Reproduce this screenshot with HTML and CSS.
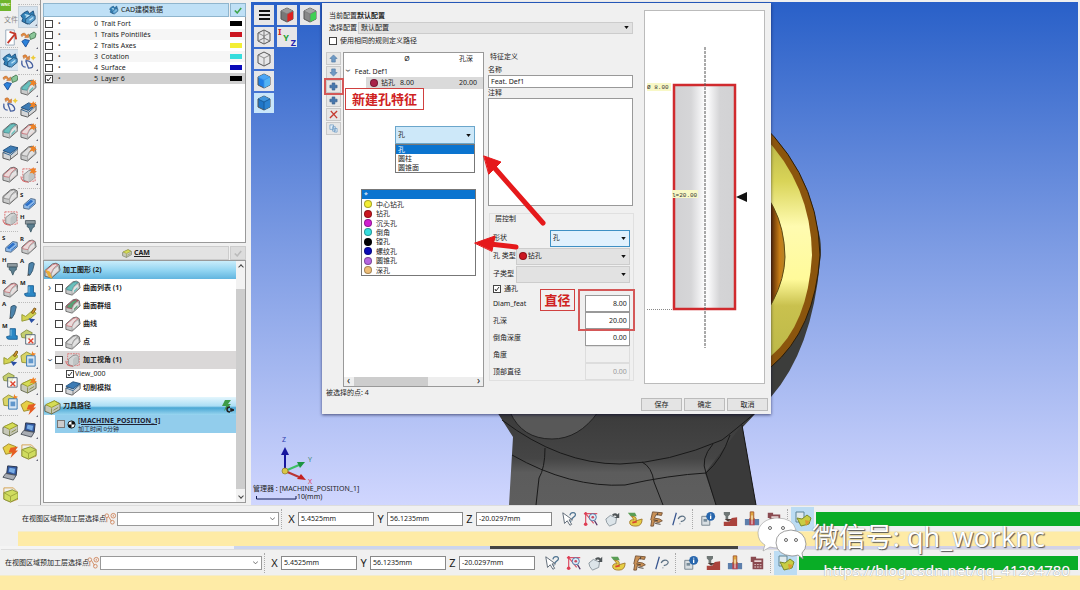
FILE: index.html
```html
<!DOCTYPE html>
<html lang="zh-CN">
<head>
    <meta charset="UTF-8">
    <meta name="viewport" content="width=device-width, initial-scale=1.0">
    <title>WorkNC</title>
    <link rel="stylesheet" href="styles.css">
</head>
<body>

    <!-- Icon sprite -->
    <svg class="sprite" aria-hidden="true">
        <symbol id="part" viewBox="0 0 18 18">
            <path d="M1 9 9 2q4-2 7 1l1 6-9 8-7-2z" fill="#c9caca" stroke="#666" stroke-linejoin="round"/>
            <path d="M2 9 9 3q3-2 6 0-6 3-7 9l-6-1z" fill="var(--c, #ddd)" stroke="var(--l, #777)" stroke-width=".7"/>
            <path d="M8 12q1-5 7-8l1 5-8 7z" fill="#e4e4e4" stroke="#888" stroke-width=".6"/>
            <path d="m10 12 4-4v2l-4 4z" fill="var(--c, #ddd)"/>
        </symbol>
        <symbol id="slab" viewBox="0 0 18 18">
            <path d="M1 9v6l7 2 9-7V4z" fill="#d4d6d8" stroke="#555"/>
            <path d="m1 7 8-5 8 2-8 6z" fill="#3d7cb5" stroke="#24527e"/>
            <path d="m1 9 8 3 8-7" fill="none" stroke="#2f638f"/>
            <path d="M9 12v5" stroke="#777"/>
        </symbol>
        <symbol id="outline" viewBox="0 0 18 18">
            <path d="M3 2h13v13H3z" fill="none" stroke="#dc6a6a" stroke-dasharray="2 1"/>
            <path d="m4 8 5-4q4-2 6 1v7l-6 4-5-2z" fill="#d3d5d5" stroke="#8a8a8a"/>
            <path d="M9 9q1-4 6-4v7l-6 4z" fill="#bfc4c4"/>
            <path d="M1 10q0 6 8 6" fill="none" stroke="#d25b5b"/>
        </symbol>
        <symbol id="spark" viewBox="0 0 18 18">
            <path d="m14 0 1 2 2-1-1 3 2 1-3 1v2l-2-2-3 1 2-3-2-2h3z" fill="#ee8225"/>
        </symbol>
        <symbol id="cad" viewBox="0 0 18 18">
            <path d="M4 4 8 2l2 3 4-3 1 4-2 4-5 6-6-3 1-3-2-3z" fill="#2f7fb5" stroke="#1d4f7c"/>
            <path d="m6 11 6-5 4 1v4l-6 5-4-1z" fill="#5aa0d0" stroke="#28577e"/>
            <path d="m5 6 4 1-3 2M10 12l4-3" stroke="#bfe4f6" fill="none" stroke-width="1.4"/>
        </symbol>
        <symbol id="surf" viewBox="0 0 18 18">
            <path d="M1 4q4-4 6 1l2-2v4H5l1-1Q4 3 2 6z" fill="#e6893c" stroke="#a85b20" stroke-width=".5"/>
            <path d="m10 4 5-3 2 2-1 4-5 2z" fill="#8bc79a" stroke="#487954"/>
            <path d="m2 11 3-2 5 1-4 7z" fill="#2d83db" stroke="#1c4f99"/>
        </symbol>
        <symbol id="curve" viewBox="0 0 18 18">
            <path d="M3 3q4-3 5 2l2-2v4H6l1-1Q6 3 4 6z" fill="#e6893c" stroke="#a85b20" stroke-width=".5"/>
            <path d="m14 2 1 2 2 1-2 1-1 2-1-2-2-1 2-1z" fill="#edcb38"/>
            <path d="M2 8q-1 7 4 7M6 8l3 8q6 0 4-4-2-4-7-4" fill="none" stroke="#4660a0" stroke-width="1.4"/>
        </symbol>
        <symbol id="blue-part" viewBox="0 0 18 18">
            <path d="m3 11 8-7 5 1v5l-7 6-6-1z" fill="#8db9e9" stroke="#4c6583"/>
            <path d="m5 11 6-5 2 1-6 5zM9 14l6-5" fill="#2c73d0" stroke="#2769bf"/>
        </symbol>
        <symbol id="holder" viewBox="0 0 18 18">
            <path d="M5 4h11v4H5z" fill="#8e9aa0" stroke="#566168"/>
            <path d="M7 8h8v3l-2 1-2 5-2-5-2-1z" fill="#5c7f90" stroke="#3e5b69"/>
        </symbol>
        <symbol id="pen" viewBox="0 0 18 18">
            <path d="M9 3q4-3 6 0l-2 8-3 5-2-1z" fill="#4c83ab" stroke="#35566e"/>
            <path d="m8 14-1 3 3-1z" fill="#444"/>
        </symbol>
        <symbol id="mill" viewBox="0 0 18 18">
            <path d="M8 3h6v8h2v4H7q-3 0-3-3l4-1z" fill="#2b87c5" stroke="#1b5f94"/>
            <path d="M9 4v7" stroke="#8acbea"/>
        </symbol>
        <symbol id="path-tool" viewBox="0 0 18 18">
            <path d="m2 8 4 2 8-7 3 4-7 6-8 2z" fill="#d3d352" stroke="#969a35"/>
            <path d="m12 6 3-5 2 1-3 5z" fill="#d69a32" stroke="#7e5717"/>
            <path d="m9 12 7 1-4 4z" fill="#294fa5"/>
        </symbol>
        <symbol id="path-del" viewBox="0 0 18 18">
            <path d="m1 5 6-4 6 3-3 6-8-1z" fill="#c5cf70" stroke="#899344"/>
            <path d="M6 6h10v10H6z" fill="#fff" fill-opacity=".7" stroke="#567"/>
            <path d="m9 10 5 5m0-5-5 5" stroke="#df4631" stroke-width="1.5"/>
        </symbol>
        <symbol id="path-view" viewBox="0 0 18 18">
            <path d="m1 5 6-4 6 3-3 9-8-1z" fill="#d9d468" stroke="#989638"/>
            <path d="M7 5h9v11H7z" fill="#d9e7f4" stroke="#3374ae"/>
            <path d="M9 8h5v5H9z" fill="#6197cc"/>
            <path d="m13 0 1 2 3 1-3 2-2-1z" fill="#ee8225"/>
        </symbol>
        <symbol id="gold" viewBox="0 0 18 18">
            <path d="m1 8 10-5 6 3v6l-9 5-7-3z" fill="#c7c8b8" stroke="#666a55"/>
            <path d="m2 7 9-4 5 3-8 4z" fill="#d5dc55" stroke="#9b9e2c"/>
            <path d="M8 11v6m2-4 5-3" stroke="#858b4a"/>
        </symbol>
        <symbol id="bolt" viewBox="0 0 18 18">
            <path d="m1 6 6-4 8 3-2 6-9 2z" fill="#e6cf45" stroke="#a08a2b"/>
            <path d="m9 6 8-1-3 4h3l-8 8 2-6H7z" fill="#e65c22"/>
        </symbol>
        <symbol id="laptop" viewBox="0 0 18 18">
            <path d="m6 2 10 1-1 9-10-2z" fill="#3359a0" stroke="#27334b"/>
            <path d="m8 4 6 1-1 5-6-2z" fill="#7aaee5"/>
            <path d="m4 10 11 2-3 5-11-3z" fill="#a9adb4" stroke="#4d535d"/>
        </symbol>
        <symbol id="wire" viewBox="0 0 18 18">
            <path d="M2 2h10l5 5v7l-8 3-7-3z" fill="none" stroke="#d4a34c"/>
            <path d="m2 7 9-3 6 3v6l-8 4-7-3z" fill="#d0dc5e" stroke="#85923d"/>
            <path d="m2 7 7 4v5m0-5 8-4" fill="none" stroke="#9da53c"/>
        </symbol>
        <symbol id="cube" viewBox="0 0 20 20">
            <path d="m10 3 6 3v8l-6 3-6-3V6z" fill="var(--left, none)" stroke="#555"/>
            <path d="m10 3 6 3-6 3-6-3z" fill="var(--top, none)"/>
            <path d="m10 9 6-3v8l-6 3z" fill="var(--right, none)"/>
            <path d="m4 6 6 3 6-3m-6 3v8" fill="none" stroke="var(--edge, #777)" stroke-width=".8"/>
        </symbol>
        <symbol id="help-cursor" viewBox="0 0 18 18">
            <path d="m2 2 2 12 3-3 3 5 2-1-3-5h4z" fill="#fff" stroke="#53606d"/>
            <path d="M10 5q1-4 5-3 3 2-1 5l-2 2m-1 2v1" fill="none" stroke="#4d7290" stroke-width="1.4"/>
        </symbol>
        <symbol id="measure" viewBox="0 0 18 18">
            <path d="M3 1v14M1 3h15M4 4l8 10" fill="none" stroke="#db556b" stroke-width="1.4"/>
            <circle cx="11" cy="7" r="4" fill="#dceaf6" stroke="#4771a4"/>
            <circle cx="11" cy="7" r="1.500" fill="#c8495d"/>
            <path d="m13 11 3 5" stroke="#536" stroke-width="1.500"/>
            <circle cx="3" cy="3" r="1.500" fill="#df3d53"/><circle cx="3" cy="15" r="2" fill="#df3d53"/>
        </symbol>
        <symbol id="turn" viewBox="0 0 18 18">
            <path d="m1 9 5-4 7 3-1 6-7 3-3-4z" fill="#dce4e9" stroke="#88949c"/>
            <path d="M8 4q4-3 6 0l2-2v6h-5l2-2q-2-2-4 0" fill="#4f5558"/>
        </symbol>
        <symbol id="paint" viewBox="0 0 18 18">
            <path d="M1 2h8l2 4H4z" fill="#5a9d55"/>
            <path d="M5 6q7 0 5 5l7-2q0 8-7 8-7 0-7-4t5-3z" fill="#e6ce44" stroke="#a2782a"/>
            <path d="m6 13 5-1" stroke="#d7462f" stroke-width="2"/>
        </symbol>
        <symbol id="caliper" viewBox="0 0 18 18">
            <path d="m4 1 11 1-1 3-6-1-2 4 6 1 3 2-4 2-5-1-1 5H2l1-6-1-1z" fill="#c99055" stroke="#725034"/>
            <path d="m10 2-1 3m-4 5 5 1m-3 3 6 1" stroke="#423932"/>
        </symbol>
        <symbol id="slash-help" viewBox="0 0 18 18">
            <path d="M6 2 2 16" stroke="#37558f" stroke-width="1.4"/>
            <path d="M8 9q2-4 6-3 4 2 0 5l-3 1m-1 2v1" fill="none" stroke="#5c7184" stroke-width="1.3"/>
        </symbol>
        <symbol id="info" viewBox="0 0 18 18">
            <path d="M2 6h9v10H2z" fill="#d8dee2" stroke="#6f7d87"/>
            <path d="M4 9h4v3H4z" fill="#778b98"/>
            <circle cx="12" cy="6" r="5" fill="#2866ad"/><path d="M12 5v4m0-6v1" stroke="#fff" stroke-width="1.5"/>
        </symbol>
        <symbol id="machine" viewBox="0 0 18 18">
            <path d="M2 1h7v3L7 6v3H4V6L2 4z" fill="#6f7776"/>
            <path d="M2 12h6l3-4 6-1v10H2z" fill="#aa433d"/>
            <path d="m3 9 4 3 4-3z" fill="#503c38"/>
        </symbol>
        <symbol id="stock" viewBox="0 0 18 18">
            <path d="M1 9h16v7H1z" fill="#5d7fac"/>
            <path d="M6 8h6v8H6z" fill="#b54751"/>
            <path d="M7 1h4v9H7z" fill="#e0a73f" stroke="#a1562c"/>
            <path d="M9 5v10" stroke="#fff"/>
        </symbol>
        <symbol id="calc" viewBox="0 0 18 18">
            <path d="M2 2h6v2h8v12H4V8H2z" fill="#8a4a50"/>
            <path d="M6 6h8v2H6zM6 10h2v1H6zM9 10h2v1H9zM12 10h2v1h-2zM6 13h2v1H6zM9 13h2v1H9zM12 13h2v1h-2z" fill="#e8d3d3"/>
        </symbol>
        <symbol id="rings" viewBox="0 0 14 14">
            <g fill="none" stroke="#cf8860"><circle cx="3" cy="4" r="2"/><circle cx="10" cy="4" r="2.500"/><circle cx="9" cy="11" r="2"/><path d="M3 6v5m7-8v2m-5 0 3 5"/></g>
        </symbol>
        <symbol id="run" viewBox="0 0 18 18">
            <path d="M2 2h8v10H2z" fill="#dfe9ec" stroke="#5d8495"/>
            <path d="m3 8 5 1 5-4 4 3-2 6-8 2z" fill="#c8cd43" stroke="#7b8a2c"/>
            <path d="m11 10 5 1-4 5z" fill="#dd9a31"/>
        </symbol>
        <symbol id="plus" viewBox="0 0 10 10"><path d="M3.500 1h3v2.500H9v3H6.500V9h-3V6.500H1v-3h2.500z" fill="#4777ad" stroke="#2b5182" stroke-width=".6"/></symbol>
        <symbol id="up" viewBox="0 0 10 10"><path d="m5 1 4 4H7v4H3V5H1z" fill="#6f9ac5" stroke="#406d9c" stroke-width=".6"/></symbol>
    </svg>

    <div class="app">
        <div class="upper">

            <!-- Outer tool strip -->
            <nav class="strip strip-outer" aria-label="工具">
                <div class="strip-head">
                    <span class="logo">WNC</span>
                    <span class="file-menu">文件</span>
                    <button class="tool" aria-label="打开"><svg viewBox="0 0 18 18"><path d="M4 1h9v16H4z" fill="#fff" stroke="#9ab"/><path d="m6 15 8-10m-6-2 6 2 1 6" fill="none" stroke="#c53a2c" stroke-width="2"/></svg></button>
                </div>
                <div class="tool-group">
                    <button class="tool active" aria-label="CAD"><svg><use href="#cad"/></svg></button>
                    <button class="tool" aria-label="曲面"><svg><use href="#surf"/></svg></button>
                    <button class="tool" aria-label="曲线"><svg><use href="#curve"/></svg></button>
                </div>
                <div class="tool-group">
                    <button class="tool" aria-label="曲面列表"><svg class="teal"><use href="#part"/></svg></button>
                    <button class="tool" aria-label="毛坯"><svg><use href="#slab"/></svg></button>
                    <button class="tool" aria-label="曲线列表"><svg class="rose"><use href="#part"/></svg></button>
                    <button class="tool" aria-label="点列表"><svg class="grey"><use href="#part"/></svg></button>
                    <button class="tool" aria-label="视角"><svg><use href="#outline"/></svg></button>
                </div>
                <div class="tool-group lettered">
                    <button class="tool" aria-label="S"><i>S</i><svg><use href="#blue-part"/></svg></button>
                    <button class="tool" aria-label="H"><i>H</i><svg><use href="#holder"/></svg></button>
                    <button class="tool" aria-label="R"><i>R</i><svg class="rose"><use href="#part"/></svg></button>
                    <button class="tool" aria-label="A"><i>A</i><svg><use href="#pen"/></svg></button>
                    <button class="tool" aria-label="M"><i>M</i><svg><use href="#mill"/></svg></button>
                </div>
                <div class="tool-group">
                    <button class="tool" aria-label="新建刀路"><svg><use href="#path-tool"/></svg></button>
                    <button class="tool" aria-label="删除刀路"><svg><use href="#path-del"/></svg></button>
                    <button class="tool" aria-label="查看刀路"><svg><use href="#path-view"/></svg></button>
                </div>
                <div class="tool-group">
                    <button class="tool" aria-label="计算"><svg><use href="#gold"/></svg></button>
                    <button class="tool" aria-label="批处理"><svg><use href="#bolt"/></svg></button>
                    <button class="tool" aria-label="后处理"><svg><use href="#laptop"/></svg></button>
                    <button class="tool" aria-label="模拟"><svg><use href="#wire"/></svg></button>
                </div>
            </nav>

            <div class="main">
                <div class="workspace">

                    <!-- Inner tool strip -->
                    <nav class="strip strip-inner" aria-label="工具栏">
                        <div class="tool-group more">
                            <button class="tool active" aria-label="CAD"><svg><use href="#cad"/></svg></button>
                            <button class="tool" aria-label="曲面"><svg><use href="#surf"/></svg></button>
                            <button class="tool" aria-label="曲线"><svg><use href="#curve"/></svg></button>
                        </div>
                        <div class="tool-group more">
                            <button class="tool" aria-label="曲面列表"><svg class="teal"><use href="#part"/><use href="#spark"/></svg></button>
                            <button class="tool" aria-label="毛坯"><svg><use href="#slab"/><use href="#spark"/></svg></button>
                            <button class="tool" aria-label="曲线列表"><svg class="rose"><use href="#part"/><use href="#spark"/></svg></button>
                            <button class="tool" aria-label="点列表"><svg class="grey"><use href="#part"/><use href="#spark"/></svg></button>
                            <button class="tool" aria-label="视角"><svg><use href="#outline"/><use href="#spark"/></svg></button>
                        </div>
                        <div class="tool-group lettered">
                            <button class="tool" aria-label="S"><i>S</i><svg><use href="#blue-part"/></svg></button>
                            <button class="tool" aria-label="H"><i>H</i><svg><use href="#holder"/></svg></button>
                            <button class="tool" aria-label="R"><i>R</i><svg class="rose"><use href="#part"/></svg></button>
                            <button class="tool" aria-label="A"><i>A</i><svg><use href="#pen"/></svg></button>
                            <button class="tool" aria-label="M"><i>M</i><svg><use href="#mill"/></svg></button>
                        </div>
                        <div class="tool-group more">
                            <button class="tool" aria-label="新建刀路"><svg><use href="#path-tool"/></svg></button>
                            <button class="tool" aria-label="删除刀路"><svg><use href="#path-del"/></svg></button>
                            <button class="tool" aria-label="查看刀路"><svg><use href="#path-view"/></svg></button>
                        </div>
                        <div class="tool-group more">
                            <button class="tool" aria-label="计算"><svg><use href="#gold"/><use href="#spark"/></svg></button>
                            <button class="tool" aria-label="批处理"><svg><use href="#bolt"/></svg></button>
                            <button class="tool" aria-label="后处理"><svg><use href="#laptop"/></svg></button>
                            <button class="tool" aria-label="模拟"><svg><use href="#wire"/></svg></button>
                        </div>
                    </nav>

                    <!-- CAD and CAM panels -->
                    <aside class="side">
                        <div class="panel-head cad-head">
                            <button class="panel-title"><svg><use href="#cad"/></svg>CAD建模数据</button>
                            <button class="panel-check" aria-label="确认"><svg viewBox="0 0 10 8"><path d="m1 4 3 3 5-6" fill="none" stroke="#3fa54a" stroke-width="2"/></svg></button>
                        </div>
                        <div class="layers">
                            <table>
                                <tr><td class="c-box"><input type="checkbox" aria-label="Trait Fort"></td><td class="c-dot">•</td><td class="c-num">0</td><td>Trait Fort</td><td class="c-swatch"><span class="swatch black"></span></td></tr>
                                <tr><td class="c-box"><input type="checkbox" aria-label="Traits Pointillés"></td><td class="c-dot">•</td><td class="c-num">1</td><td>Traits Pointillés</td><td class="c-swatch"><span class="swatch red"></span></td></tr>
                                <tr><td class="c-box"><input type="checkbox" aria-label="Traits Axes"></td><td class="c-dot">•</td><td class="c-num">2</td><td>Traits Axes</td><td class="c-swatch"><span class="swatch yellow"></span></td></tr>
                                <tr><td class="c-box"><input type="checkbox" aria-label="Cotation"></td><td class="c-dot">•</td><td class="c-num">3</td><td>Cotation</td><td class="c-swatch"><span class="swatch cyan"></span></td></tr>
                                <tr><td class="c-box"><input type="checkbox" aria-label="Surface"></td><td class="c-dot">•</td><td class="c-num">4</td><td>Surface</td><td class="c-swatch"><span class="swatch blue"></span></td></tr>
                                <tr class="selected"><td class="c-box"><input type="checkbox" aria-label="Layer 6" checked></td><td class="c-dot">•</td><td class="c-num">5</td><td>Layer 6</td><td class="c-swatch"><span class="swatch black"></span></td></tr>
                            </table>
                        </div>

                        <div class="panel-head">
                            <button class="panel-title cam"><svg><use href="#gold"/></svg><u>CAM</u></button>
                            <button class="panel-check" aria-label="确认"><svg viewBox="0 0 10 8"><path d="m1 4 3 3 5-6" fill="none" stroke="#bbb" stroke-width="2"/></svg></button>
                        </div>
                        <div class="cam-box">
                            <ul class="tree">
                                <li class="tree-head"><svg class="rose" viewBox="0 0 18 18"><use href="#part"/><path d="m1 8 5 2 3 8-4-2z" fill="#e8ae37"/></svg>加工图形 (2)</li>
                                <li class="tree-row"><span class="twist">›</span><label><input type="checkbox"><svg class="teal"><use href="#part"/></svg>曲面列表 (1)</label></li>
                                <li class="tree-row"><span class="twist"></span><label><input type="checkbox"><svg class="mix"><use href="#part"/></svg>曲面群组</label></li>
                                <li class="tree-row"><span class="twist"></span><label><input type="checkbox"><svg class="rose"><use href="#part"/></svg>曲线</label></li>
                                <li class="tree-row"><span class="twist"></span><label><input type="checkbox"><svg class="grey"><use href="#part"/></svg>点</label></li>
                                <li class="tree-row"><span class="twist down">›</span><label class="hl"><input type="checkbox"><svg><use href="#outline"/></svg>加工视角 (1)</label></li>
                                <li class="tree-view"><label><input type="checkbox" checked>View_000</label></li>
                                <li class="tree-row"><span class="twist"></span><label><input type="checkbox"><svg><use href="#slab"/></svg>切削模拟</label></li>
                                <li class="tree-head paths"><svg><use href="#gold"/></svg>刀具路径
                                    <svg class="go" viewBox="0 0 14 14"><path d="M5 1h6L8 5h3l-7 7 2-5H2z" fill="#3f9c48"/><path d="M10 8q-3 0-3 2.500T10 13m1-3 3 1-3 1z" fill="none" stroke="#222" stroke-width="1.500"/></svg></li>
                                <li class="machine-row">
                                    <input type="checkbox" aria-label="MACHINE_POSITION_1">
                                    <svg viewBox="0 0 10 10"><circle cx="5" cy="5" r="4" fill="#fff" stroke="#111"/><path d="M5 1a4 4 0 0 1 4 4H5v4a4 4 0 0 1-4-4h4z" fill="#111"/></svg>
                                    <a href="#machine"><u>[MACHINE_POSITION_1]</u><small>加工时间 0分钟</small></a>
                                </li>
                            </ul>
                            <div class="scroll-v"><span class="arrow-up"></span><span class="thumb"></span><span class="arrow-down"></span></div>
                        </div>
                    </aside>

                    <!-- 3D view -->
                    <main class="viewport">
                        <svg class="scene" viewBox="251 2 827 503" preserveAspectRatio="xMinYMin slice">
                            <defs>
                                <linearGradient id="gold-face" x1="0" y1="0" x2="0" y2="1">
                                    <stop offset="0" stop-color="#a9a63c"/><stop offset=".25" stop-color="#d9d458"/><stop offset=".42" stop-color="#fffbb0"/><stop offset=".62" stop-color="#fffa9a"/><stop offset=".72" stop-color="#c9c14e"/><stop offset="1" stop-color="#b7b546"/>
                                </linearGradient>
                                <linearGradient id="bore" x1="0" y1="0" x2="1" y2="0">
                                    <stop offset=".7" stop-color="#5a2c08"/><stop offset=".88" stop-color="#c77c15"/><stop offset="1" stop-color="#b38528"/>
                                </linearGradient>
                                <linearGradient id="steel" x1="0" y1="0" x2="0" y2="1">
                                    <stop offset="0" stop-color="#3b3b3b"/><stop offset=".5" stop-color="#454545"/><stop offset=".65" stop-color="#5c5c5c"/><stop offset="1" stop-color="#5e5e5e"/>
                                </linearGradient>
                            </defs>
                            <path d="M740 160Q830 200 820 262 812 350 771 397L740 430z" fill="#3c3d3b"/>
                            <path d="M740 105Q818 165 820 255 815 330 771 367L740 390z" fill="#8b550d" stroke="#2b1c08"/>
                            <path d="M740 115Q811 170 812 255 808 325 771 356L740 380z" fill="url(#gold-face)"/>
                            <path d="M740 170Q784 200 785 257 784 300 740 345z" fill="url(#bore)" stroke="#5d4a15"/>
                            <path d="M497 412 513 437 509 505H756L742 425 756 412z" fill="url(#steel)"/>
                            <path d="M742 425 705 473 716 505H756z" fill="#3a3a3a"/>
                            <path d="M510 412q12 27 42 27 27 0 46-27z" fill="#585858" stroke="#222"/>
                            <g fill="none" stroke="#191919" stroke-width="1">
                                <path d="M502 420Q560 464 620 464 668 463 722 440 735 430 755 413"/>
                                <path d="M512 455Q570 488 625 485 670 475 706 473"/>
                                <path d="M642 462q10 5 12 20l9 23M706 473l10 32M706 473q-6-14 7-29M706 473q16-14 24-38M545 448q0 20-6 30l-3 27M742 425l14 80"/>
                            </g>
                            <!-- axis triad -->
                            <g stroke-width="2">
                                <path d="M285 471V454" stroke="#16169e"/><path d="m285 447 4 8h-8z" fill="#16169e"/>
                                <path d="m285 471 14-6" stroke="#3dbf64"/><path d="m305 462-8 0 3 6z" fill="#1c9440"/>
                                <path d="m285 471 14 6" stroke="#b93434"/><path d="m306 480-5-6-4 5z" fill="#c42020"/>
                            </g>
                            <circle cx="285" cy="471" r="3" fill="#d9c746" stroke="#8b7c26" stroke-width=".7"/>
                            <text x="282" y="442" fill="#303fae">Z</text>
                            <text x="308" y="462" fill="#438a72">Y</text>
                            <text x="308" y="484" fill="#dd3b5b">X</text>
                            <text x="253" y="491" fill="#222">管理器 : [MACHINE_POSITION_1]</text>
                            <text x="297" y="499" fill="#222">10(mm)</text>
                            <path d="M256.500 496v3H296v-3" fill="none" stroke="#111a55"/>
                        </svg>

                        <div class="view-buttons">
                            <button aria-label="菜单"><svg viewBox="0 0 20 20"><path d="M5 6h11M5 10h11M5 14h11" stroke="#111" stroke-width="2"/></svg></button>
                            <button aria-label="剖切红"><svg class="cube-red"><use href="#cube"/></svg></button>
                            <button aria-label="剖切绿"><svg class="cube-green"><use href="#cube"/></svg></button>
                            <button aria-label="线框"><svg><use href="#cube"/><path d="M10 3v8M4 14l6-3 6 3" fill="none" stroke="#777"/></svg></button>
                            <button aria-label="坐标" class="xyz"><b class="ax">I</b><b class="ay">Y</b><b class="az">Z</b></button>
                            <button aria-label="隐藏线" class="first"><svg><use href="#cube"/></svg></button>
                            <button aria-label="着色" class="first"><svg class="cube-sky"><use href="#cube"/></svg></button>
                            <button aria-label="着色带边" class="first lit"><svg class="cube-blue"><use href="#cube"/></svg></button>
                        </div>

                        <!-- Feature dialog -->
                        <section class="dialog">
                            <div class="config">
                                <p>当前配置<b>默认配置</b></p>
                                <div class="config-row"><label for="config">选择配置</label><select id="config"><option>默认配置</option></select></div>
                                <label class="check"><input type="checkbox">使用相同的规则定义路径</label>
                            </div>

                            <div class="dialog-body">
                                <div class="list-tools">
                                    <button aria-label="上移"><svg><use href="#up"/></svg></button>
                                    <button aria-label="下移"><svg class="flip"><use href="#up"/></svg></button>
                                    <button aria-label="新建孔特征"><svg><use href="#plus"/></svg></button>
                                    <button aria-label="添加"><svg><use href="#plus"/></svg></button>
                                    <button aria-label="删除"><svg viewBox="0 0 10 10"><path d="m2 1 7 8M9 1 1 9" stroke="#c53b31" stroke-width="1.500"/></svg></button>
                                    <button aria-label="复制"><svg viewBox="0 0 10 10"><path d="M1 1h4v5H1zM4 3h3v5H4zM6 5h3v4H6z" fill="#e4eef7" stroke="#6d9ac4" stroke-width=".8"/></svg></button>
                                </div>

                                <div class="features">
                                    <table>
                                        <tr><th class="kind-col"></th><th class="diam-col">Ø</th><th class="deep-col">孔深</th></tr>
                                        <tr><td colspan="3" class="feat"><span class="twist down">›</span> Feat. Def1</td></tr>
                                        <tr class="picked"><td class="kind"><span class="dot crimson"></span>钻孔</td><td>8.00</td><td class="deep">20.00</td></tr>
                                    </table>
                                    <div class="scroll-h"><span>‹</span><span class="thumb"></span><span>›</span></div>
                                </div>

                                <div class="define">
                                    <fieldset>
                                        <legend>特征定义</legend>
                                        <label for="name">名称</label>
                                        <input type="text" id="name" value="Feat. Def1">
                                        <label for="note">注释</label>
                                        <textarea id="note"></textarea>
                                    </fieldset>
                                    <fieldset class="levels">
                                        <legend>层控制</legend>
                                        <div class="field"><label for="shape">形状</label><select id="shape" class="shape"><option>孔</option></select></div>
                                        <div class="field"><label for="hole">孔 类型</label><span class="combo"><span class="dot red"></span><select id="hole" class="with-dot"><option>钻孔</option></select></span></div>
                                        <div class="field"><label for="sub">子类型</label><select id="sub"><option></option></select></div>
                                        <label class="check"><input type="checkbox" checked>通孔</label>
                                        <div class="field number"><label for="diam">Diam_feat</label><input type="text" id="diam" value="8.00"></div>
                                        <div class="field number"><label for="depth">孔深</label><input type="text" id="depth" value="20.00"></div>
                                        <div class="field number"><label for="chamfer">倒角深度</label><input type="text" id="chamfer" value="0.00"></div>
                                        <div class="field number"><label for="angle">角度</label><input type="text" id="angle" disabled></div>
                                        <div class="field number"><label for="topdiam">顶部直径</label><input type="text" id="topdiam" value="0.00" disabled></div>
                                    </fieldset>
                                </div>
                            </div>
                            <p class="picked-count">被选择的点: 4</p>

                            <div class="preview">
                                <svg viewBox="645 11 119 372" preserveAspectRatio="xMidYMin slice">
                                    <defs><linearGradient id="hole-fill"><stop offset=".05" stop-color="#d2d2d4"/><stop offset=".28" stop-color="#d6d6d8"/><stop offset=".5" stop-color="#fcfcfd"/><stop offset=".56" stop-color="#fafafb"/><stop offset=".75" stop-color="#d4d4d6"/><stop offset="1" stop-color="#d2d2d4"/></linearGradient></defs>
                                    <rect x="674" y="85" width="61" height="224" fill="url(#hole-fill)" stroke="#d02a2e" stroke-width="2.500"/>
                                    <path d="M705 47v301" stroke="#555" stroke-dasharray="3 1"/>
                                    <path d="M647 309.500h26" stroke="#888" stroke-dasharray="1 1"/>
                                    <path d="m736 197 11-5v10z" fill="#111"/>
                                    <rect x="647" y="83" width="24" height="8" fill="#f8f8c6"/>
                                    <text x="647" y="89">Ø 8.00</text>
                                    <rect x="672" y="190" width="26" height="8" fill="#f8f8c6"/>
                                    <text x="672" y="197">l=20.00</text>
                                </svg>
                            </div>
                            <div class="buttons">
                                <button>保存</button>
                                <button>确定</button>
                                <button>取消</button>
                            </div>

                            <!-- Open lists over the feature table -->
                            <div class="shape-list">
                                <select aria-label="形状"><option>孔</option></select>
                                <ul><li class="on">孔</li><li>圆柱</li><li>圆锥面</li></ul>
                            </div>
                            <ul class="type-list">
                                <li class="on">*</li>
                                <li><span class="dot yellow"></span>中心钻孔</li>
                                <li><span class="dot red"></span>钻孔</li>
                                <li><span class="dot magenta"></span>沉头孔</li>
                                <li><span class="dot cyan"></span>倒角</li>
                                <li><span class="dot black"></span>镗孔</li>
                                <li><span class="dot blue"></span>螺纹孔</li>
                                <li><span class="dot violet"></span>圆锥孔</li>
                                <li><span class="dot orange"></span>深孔</li>
                            </ul>

                            <!-- Red annotations -->
                            <span class="mark mark-button"></span>
                            <span class="note note-new">新建孔特征</span>
                            <span class="mark mark-fields"></span>
                            <span class="note note-diam">直径</span>
                            <svg class="arrows" viewBox="322 3 449 411">
                                <g fill="#e5191b" stroke="#e5191b" stroke-linecap="round">
                                    <path d="m492 165 51 58" stroke-width="5"/><path d="m484 156 17 6-12 12z" stroke-width="1"/>
                                    <path d="m490 244 26 3" stroke-width="5"/><path d="m475 243 20-7-3 15z" stroke-width="1"/>
                                </g>
                            </svg>
                        </section>
                    </main>
                </div>

                <!-- Coordinate bar -->
                <div class="bar">
                    <label class="bar-label" for="layer-a">在视图区域预加工层选择点</label>
                    <svg class="rings"><use href="#rings"/></svg>
                    <select id="layer-a" class="layer-select"><option></option></select>
                    <span class="grip"></span>
                    <label class="axis" for="xa">X</label><input type="text" id="xa" value="5.4525mm">
                    <label class="axis" for="ya">Y</label><input type="text" id="ya" value="56.1235mm">
                    <label class="axis" for="za">Z</label><input type="text" id="za" value="-20.0297mm">
                    <div class="bar-icons">
                        <button aria-label="选择"><svg><use href="#help-cursor"/></svg></button>
                        <button aria-label="测量"><svg><use href="#measure"/></svg></button>
                        <button aria-label="旋转"><svg><use href="#turn"/></svg></button>
                        <button aria-label="颜色"><svg><use href="#paint"/></svg></button>
                        <button aria-label="卡尺"><svg><use href="#caliper"/></svg></button>
                        <button aria-label="查询"><svg><use href="#slash-help"/></svg></button>
                    </div>
                    <span class="grip"></span>
                    <div class="bar-icons status-icons">
                        <button aria-label="信息"><svg><use href="#info"/></svg></button>
                        <button aria-label="机床"><svg><use href="#machine"/></svg></button>
                        <button aria-label="毛坯"><svg><use href="#stock"/></svg></button>
                        <button aria-label="计算"><svg><use href="#calc"/></svg></button>
                    </div>
                    <span class="grip"></span>
                    <button class="run" aria-label="运行"><svg><use href="#run"/></svg></button>
                    <div class="progress"></div>
                </div>
                <div class="message"></div>
            </div>
        </div>

        <div class="sliver"></div>

        <div class="bar bar-low">
            <label class="bar-label" for="layer-b">在视图区域预加工层选择点</label>
            <svg class="rings"><use href="#rings"/></svg>
            <select id="layer-b" class="layer-select"><option></option></select>
            <span class="grip"></span>
            <label class="axis" for="xb">X</label><input type="text" id="xb" value="5.4525mm">
            <label class="axis" for="yb">Y</label><input type="text" id="yb" value="56.1235mm">
            <label class="axis" for="zb">Z</label><input type="text" id="zb" value="-20.0297mm">
            <div class="bar-icons">
                <button aria-label="选择"><svg><use href="#help-cursor"/></svg></button>
                <button aria-label="测量"><svg><use href="#measure"/></svg></button>
                <button aria-label="旋转"><svg><use href="#turn"/></svg></button>
                <button aria-label="颜色"><svg><use href="#paint"/></svg></button>
                <button aria-label="卡尺"><svg><use href="#caliper"/></svg></button>
                <button aria-label="查询"><svg><use href="#slash-help"/></svg></button>
            </div>
            <span class="grip"></span>
            <div class="bar-icons status-icons">
                <button aria-label="信息"><svg><use href="#info"/></svg></button>
                <button aria-label="机床"><svg><use href="#machine"/></svg></button>
                <button aria-label="毛坯"><svg><use href="#stock"/></svg></button>
                <button aria-label="计算"><svg><use href="#calc"/></svg></button>
            </div>
            <span class="grip"></span>
            <button class="run" aria-label="运行"><svg><use href="#run"/></svg></button>
            <div class="progress"></div>
        </div>
        <div class="message"></div>

        <!-- Watermarks -->
        <div class="wechat">
            <svg viewBox="0 0 50 44">
                <path d="M20 1C9 1 1 8 1 16q0 8 7 12l-2 6 7-4q4 1 8 1-1-16 18-18Q36 1 20 1z" fill="#fff" stroke="#999" stroke-width=".6"/>
                <path d="M34 13q-15 1-15 13 1 12 16 13 3 0 6-1l5 4-1-6q4-4 4-9-1-13-15-14z" fill="#fff" stroke="#888" stroke-width=".8"/>
                <g fill="#fff" stroke="#666"><circle cx="13" cy="11" r="1.500"/><circle cx="26" cy="11" r="1.500"/><circle cx="29" cy="23" r="1.500"/><circle cx="39" cy="23" r="1.500"/></g>
            </svg>
            <span>微信号: qh_worknc</span>
        </div>
        <span class="blog-url">https://blog.csdn.net/qq_41284780</span>
    </div>

</body>
</html>
```

FILE: styles.css
```css
* {
    margin: 0;
    padding: 0;
    box-sizing: border-box;
}
body {
    font-family: "Noto Sans", "Noto Sans CJK SC", sans-serif;
    font-size: 7px;
    line-height: 10px;
    color: #222;
    background: #f0f0f0;
}
button, input, select, textarea {
    font: inherit;
    color: inherit;
    border-radius: 0;
}
button {
    border: none;
    background: none;
}
ul {
    list-style: none;
}
svg {
    display: block;
    flex: none;
}
.sprite {
    position: absolute;
    width: 0;
    height: 0;
}
input[type="checkbox"] {
    appearance: none;
    flex: none;
    width: 8px;
    height: 8px;
    border: 1px solid #444;
    background: #fff;
}
input[type="checkbox"]:checked {
    background: #fff url("data:image/svg+xml,%3Csvg xmlns='http://www.w3.org/2000/svg' viewBox='0 0 6 6'%3E%3Cpath d='m1 3 1 2 3-4' fill='none' stroke='%23333'/%3E%3C/svg%3E");
}
input[type="text"], textarea {
    border: 1px solid #999;
    background: #fff;
    padding: 0 2px;
    min-width: 0;
}
select {
    appearance: none;
    border: 1px solid #ccc;
    background: #e2e2e2 url("data:image/svg+xml,%3Csvg xmlns='http://www.w3.org/2000/svg' viewBox='0 0 6 4'%3E%3Cpath d='M0 0h6L3 4z' fill='%23111'/%3E%3C/svg%3E") no-repeat right 3px center / 5px 3px;
    padding: 0 2px;
    min-width: 0;
}

/* icon colours */
.teal { --c: #69c0bd; --l: #397f86; }
.rose { --c: #eadada; --l: #c4545c; }
.grey { --c: #dedede; --l: #777; }
.mix { --c: #58a176; --l: #bf2348; }
.cube-red { --left: #777; --top: #999; --right: #dd2222; }
.cube-green { --left: #888; --top: #a5a5a5; --right: #3fd053; }
.cube-sky { --left: #1f7fe6; --top: #4aa5f5; --right: #53b4f4; --edge: #3d93e8; }
.cube-blue { --left: #1f76c7; --top: #3f95dd; --right: #2b83d1; --edge: #145491; }
.black { background: #000; }
.red { background: #cb1620; }
.yellow { background: #f3ee34; }
.cyan { background: #35dddd; }
.blue { background: #0a0ab8; }
.crimson { background: #a82249; }
.magenta { background: #d01fd0; }
.violet { background: #b565df; }
.orange { background: #eebd75; }

.app {
    position: relative;
    display: flex;
    flex-direction: column;
    min-height: 100vh;
    overflow: hidden;
}
.upper {
    flex: 1;
    display: flex;
}
.main {
    flex: 1;
    min-width: 0;
    display: flex;
    flex-direction: column;
}
.workspace {
    flex: 1;
    display: flex;
}

/* tool strips */
.strip {
    flex: none;
    overflow: hidden;
}
.strip-outer {
    width: 18px;
}
.strip-inner {
    width: 22px;
    padding-top: 4px;
}
.strip-head {
    height: 47px;
}
.logo {
    display: block;
    width: 11px;
    height: 11px;
    background: #6fb52c;
    color: #fff;
    font-size: 4px;
    font-weight: bold;
    text-align: center;
}
.file-menu {
    display: block;
    height: 15px;
    padding: 4px 0 0 4px;
    color: #888;
    white-space: nowrap;
}
.tool-group {
    border-top: 1px dotted #bbb;
    padding-top: 1px;
    margin-bottom: 2px;
}
.tool {
    position: relative;
    display: flex;
    align-items: center;
    justify-content: center;
    width: 20px;
    height: 22px;
}
.tool svg {
    width: 17px;
    height: 17px;
}
.tool.active {
    background: #d5e3ef;
    border: 1px solid #c5d0da;
}
.tool i {
    position: absolute;
    left: 2px;
    top: 1px;
    font: bold 6px/8px "Noto Sans", sans-serif;
    z-index: 1;
}
.lettered svg {
    margin: 3px 0 0 2px;
    width: 16px;
    height: 16px;
}
.more .tool::after {
    content: "";
    position: absolute;
    right: 0;
    bottom: 1px;
    border: 1px solid #667;
    border-top-color: transparent;
    border-left-color: transparent;
}

/* side panels */
.side {
    flex: none;
    width: 206px;
    padding: 3px 0 2px 2px;
    border-left: 1px solid #999;
    display: flex;
    flex-direction: column;
}
.panel-head {
    display: flex;
    gap: 1px;
    height: 14px;
}
.panel-title {
    flex: 1;
    display: flex;
    align-items: center;
    justify-content: center;
    gap: 2px;
    border: 1px solid #ccc;
    background: #e3e3e3;
}
.panel-title svg {
    width: 10px;
    height: 10px;
}
.panel-title.cam {
    font-weight: bold;
}
.panel-check {
    width: 16px;
    border: 1px solid #ccc;
    background: #dcdcdc;
    display: flex;
    align-items: center;
    justify-content: center;
}
.panel-check svg {
    width: 8px;
    height: 7px;
}
.cad-head .panel-title, .cad-head .panel-check {
    background: #bfe0f6;
    border-color: #8fb5cd;
}
.layers {
    height: 226px;
    margin-bottom: 3px;
    padding-top: 1px;
    background: #fff;
    border: 1px solid #999;
    border-top: none;
}
.layers table {
    width: 100%;
    border-collapse: collapse;
}
.layers td {
    height: 11px;
    line-height: 11px;
}
.layers tr:nth-child(even) {
    background: #f6f6f6;
}
.layers tr.selected {
    background: #d0d0d0;
}
.layers .c-box {
    width: 14px;
    padding-left: 1px;
}
.c-box input {
    display: block;
}
.c-dot {
    width: 10px;
    color: #555;
}
.c-num {
    width: 33px;
    text-align: right;
    padding-right: 3px;
}
.c-swatch {
    width: 18px;
}
.swatch {
    display: block;
    width: 12px;
    height: 5px;
    margin-left: 3px;
}
.cam-box {
    flex: 1;
    display: flex;
    background: #fff;
    border: 1px solid #999;
}
.tree {
    flex: 1;
    font-weight: bold;
}
.tree-head {
    display: flex;
    align-items: center;
    gap: 2px;
    height: 18px;
    background: linear-gradient(#c9edfb, #8fd3f1 55%, #62b5df);
}
.tree-head svg {
    width: 17px;
    height: 17px;
}
.tree-head .go {
    width: 14px;
    height: 14px;
    margin-left: auto;
    margin-right: 2px;
}
.tree-head.paths {
    background: linear-gradient(#e4f6fd, #abdef5 50%, #4aa7d4 60%, #9ad6f0);
}
.tree-row {
    display: flex;
    height: 18px;
}
.twist {
    width: 11px;
    text-align: center;
    font-size: 10px;
    line-height: 16px;
    font-weight: normal;
    color: #555;
}
.twist.down {
    transform: rotate(90deg);
}
.tree-row label {
    flex: 1;
    display: flex;
    align-items: center;
    gap: 2px;
}
.tree-row label svg {
    width: 16px;
    height: 16px;
}
.tree-row .hl {
    background: #dad8d8;
}
.tree-view label {
    display: flex;
    gap: 1px;
    padding-left: 22px;
    font-weight: normal;
    align-items: center;
    height: 10px;
}
.machine-row {
    display: flex;
    align-items: center;
    gap: 2px;
    height: 18px;
    margin-left: 11px;
    padding-left: 2px;
    background: #92cdec;
}
.machine-row input[type="checkbox"] {
    background: #ccc;
    border-color: #777;
}
.machine-row svg {
    width: 9px;
    height: 9px;
}
.machine-row a {
    color: #223;
    line-height: 9px;
    text-decoration: none;
}
.machine-row small {
    display: block;
    font-size: 6px;
    line-height: 8px;
    font-weight: normal;
}
.scroll-v {
    width: 9px;
    background: #f2f2f2;
    display: flex;
    flex-direction: column;
    align-items: center;
}
.scroll-v .thumb {
    flex: 1;
    width: 9px;
    margin: 20px 0 5px;
    background: #cdcdcd;
}
.arrow-up, .arrow-down {
    width: 4px;
    height: 4px;
    margin: 4px 0 0;
    border: solid #444;
    border-width: 1px 0 0 1px;
    transform: rotate(45deg);
}
.arrow-down {
    margin: 0 0 4px;
    border-width: 0 1px 1px 0;
}

/* 3D view */
.viewport {
    position: relative;
    flex: 1;
    min-width: 0;
    margin: 2px 2px 0 5px;
    background: linear-gradient(#2960c8, #7f9de4 50%, #d0d6fe);
}
.scene {
    position: absolute;
    inset: 0;
    width: 100%;
    height: 100%;
    font-size: 7px;
}
.view-buttons {
    position: relative;
    display: grid;
    grid-template-columns: 20px 20px 20px;
    gap: 2px 3px;
    padding: 3px;
    width: max-content;
}
.view-buttons button {
    width: 20px;
    height: 20px;
    background: #e6e6e8;
}
.view-buttons svg {
    width: 20px;
    height: 20px;
}
.view-buttons .first {
    grid-column: 1;
}
.view-buttons .lit {
    background: #c9e6fa;
}
.xyz {
    display: flex;
    justify-content: space-around;
    font-size: 9px;
    line-height: 9px;
}
.ax { color: #d02020; }
.ay { color: #22a030; align-self: center; }
.az { color: #2222b0; align-self: flex-end; }

/* dialog */
.dialog {
    position: absolute;
    left: 71px;
    top: 1px;
    width: 449px;
    display: grid;
    grid-template-columns: 315px 1fr;
    grid-template-rows: 46px 339px auto;
    background: #f0f0f0;
    box-shadow: 0 1px 3px rgba(0, 0, 40, 0.6);
}
.config {
    padding: 8px 4px 0 7px;
}
.config-row {
    display: flex;
    gap: 1px;
    align-items: center;
    height: 13px;
}
.config-row select {
    flex: 1;
    height: 12px;
    background-color: #e2e2e2;
}
.check {
    display: flex;
    align-items: center;
    gap: 3px;
    height: 13px;
}
.dialog-body {
    grid-row: 2;
    grid-column: 1;
    display: flex;
    padding: 3px 4px 0 4px;
}
.list-tools {
    width: 17px;
    display: flex;
    flex-direction: column;
    gap: 1px;
}
.list-tools button {
    width: 15px;
    height: 13px;
    border: 1px solid #c9c9c9;
    background: #e6e6e6;
    display: flex;
    align-items: center;
    justify-content: center;
}
.list-tools svg {
    width: 9px;
    height: 9px;
}
.list-tools .flip {
    transform: rotate(180deg);
}
.features {
    width: 141px;
    height: 335px;
    border: 1px solid #999;
    background: #fff;
    display: flex;
    flex-direction: column;
    justify-content: space-between;
}
.features table {
    width: 100%;
    border-collapse: collapse;
    table-layout: fixed;
}
.features th {
    font-weight: normal;
    height: 12px;
}
.features td {
    height: 12px;
    padding: 0;
}
.kind-col {
    width: 51px;
}
.diam-col {
    width: 24px;
}
.features .deep-col {
    text-align: right;
    padding-right: 10px;
}
.features .twist {
    display: inline-block;
    width: 9px;
    line-height: 9px;
}
.picked td {
    background: #dadada;
    text-align: center;
}
.picked .kind {
    background: linear-gradient(90deg, #fff 22px, #dadada 22px);
    text-align: right;
}
.picked .deep {
    text-align: right;
    padding-right: 6px;
}
.dot {
    display: inline-block;
    flex: none;
    width: 8px;
    height: 8px;
    border-radius: 50%;
    border: 1px solid rgba(0, 0, 0, 0.3);
}
.kind .dot {
    vertical-align: middle;
    margin-right: 3px;
}
.scroll-h {
    display: flex;
    justify-content: space-between;
    height: 9px;
    line-height: 7px;
    padding: 0 3px;
    font-size: 10px;
    background: #eee;
}
.scroll-h .thumb {
    width: 74px;
    margin-right: 45px;
    background: #cdcdcd;
}
.define {
    flex: 1;
    min-width: 0;
    padding-left: 4px;
}
fieldset {
    border: none;
    display: flex;
    flex-direction: column;
}
legend {
    float: left;
    padding: 0 0 4px 2px;
    height: 13px;
}
#name {
    height: 13px;
}
#note {
    height: 108px;
    resize: none;
}
.levels {
    margin: 7px 0 0 1px;
    padding: 0 3px 0 3px;
    border: 1px solid #e0e0e0;
}
.levels legend {
    height: 15px;
}
.levels .check {
    height: 12px;
}
.field {
    display: flex;
    align-items: center;
    height: 18px;
}
.field.number {
    height: 17px;
}
.field label {
    flex: none;
    white-space: nowrap;
}
.field select {
    width: 114px;
    height: 17px;
    margin-left: auto;
}
.field .shape {
    width: 80px;
    border-color: #3f90c4;
    background-color: #e1f1fd;
}
.combo {
    position: relative;
    margin-left: auto;
}
.combo .dot {
    position: absolute;
    left: 3px;
    top: 4px;
}
.field .with-dot {
    display: block;
    padding-left: 11px;
}
.field input[type="text"] {
    width: 45px;
    height: 17px;
    margin-left: auto;
    text-align: right;
}
.field input:disabled {
    background: #f0f0f0;
    border-color: #ddd;
    color: #999;
}
.picked-count {
    grid-row: 3;
    grid-column: 1;
    padding-left: 4px;
}
.preview {
    grid-row: 1 / 3;
    grid-column: 2;
    margin: 7px 6px 4px 7px;
    background: #fff;
    border: 1px solid #bbb;
}
.preview svg {
    width: 100%;
    height: 100%;
}
.preview text {
    font: 6px "Liberation Mono", monospace;
    fill: #333;
}
.buttons {
    grid-row: 3;
    grid-column: 2;
    display: flex;
    gap: 2px;
    padding: 10px 3px 3px 4px;
}
.buttons button {
    flex: 1;
    height: 13px;
    border: 1px solid #bbb;
    background: #e4e4e4;
}
.shape-list {
    position: absolute;
    left: 73px;
    top: 123px;
    width: 80px;
}
.shape-list select {
    display: block;
    width: 100%;
    height: 18px;
    border-color: #6ba6cb;
    background-color: #cde8f9;
}
.shape-list ul, .type-list {
    background: #fff;
    border: 1px solid #777;
    display: grid;
    grid-auto-rows: 1fr;
}
.shape-list ul {
    height: 29px;
}
.shape-list li {
    padding-left: 2px;
}
.type-list {
    position: absolute;
    left: 39px;
    top: 186px;
    width: 115px;
    height: 87px;
}
.type-list li {
    display: flex;
    align-items: center;
    gap: 4px;
    padding-left: 2px;
}
.shape-list li, .type-list li {
    min-height: 0;
    line-height: 9px;
}
li.on {
    background: #0b74cf;
    color: #fff;
}

/* annotations */
.mark, .note {
    position: absolute;
    border: 1px solid #d0403f;
}
.mark {
    border-width: 2px;
    border-color: #d45858;
}
.mark-button {
    left: 2px;
    top: 75px;
    width: 20px;
    height: 17px;
}
.mark-fields {
    left: 256px;
    top: 286px;
    width: 57px;
    height: 42px;
}
.note {
    background: #fff;
    color: #cf2222;
    font-size: 13px;
    line-height: 20px;
    font-weight: bold;
    text-align: center;
}
.note-new {
    left: 23px;
    top: 85px;
    width: 79px;
}
.note-diam {
    left: 218px;
    top: 286px;
    width: 35px;
    background: #f0f0f0;
}
.arrows {
    position: absolute;
    inset: 0;
    width: 100%;
    height: 100%;
}

/* bottom bars */
.bar {
    flex: none;
    display: flex;
    align-items: center;
    height: 26px;
    padding-left: 4px;
    border-top: 1px solid #ddd;
}
.bar-low {
    margin: 0 2px 0 1px;
}
.bar-label {
    width: 82px;
    white-space: nowrap;
}
.rings {
    width: 13px;
    height: 13px;
}
.layer-select {
    width: 162px;
    height: 14px;
    border-color: #999;
    background: #fff url("data:image/svg+xml,%3Csvg xmlns='http://www.w3.org/2000/svg' viewBox='0 0 6 4'%3E%3Cpath d='m0 0 3 3 3-3' fill='none' stroke='%23555'/%3E%3C/svg%3E") no-repeat right 3px center / 5px 4px;
}
.grip {
    width: 1px;
    height: 20px;
    margin: 0 3px 0 2px;
    border-left: 1px dotted #aaa;
}
.axis {
    width: 13px;
    text-align: center;
    font-size: 11px;
}
.bar input[type="text"] {
    width: 76px;
    height: 14px;
    border-color: #888;
}
.bar-icons {
    display: flex;
    margin-left: 6px;
}
.status-icons {
    margin-left: 1px;
}
.bar-icons button {
    width: 22px;
    height: 20px;
}
.bar-icons svg {
    width: 16px;
    height: 16px;
    margin: auto;
}
.run {
    width: 23px;
    height: 24px;
    background: #bcdcf3;
    margin-right: 2px;
}
.run svg {
    width: 18px;
    height: 18px;
    margin: auto;
}
.progress {
    flex: 1;
    height: 14px;
    background: #09ad26;
}
.message {
    flex: none;
    height: 15px;
    background: #feeba6;
    border-top: 1px solid #f4eccb;
}
.sliver {
    flex: none;
    height: 3px;
    background: linear-gradient(90deg, #f4f4f4 234px, #ccd5ee 234px, #ccd5ee 490px, #444 490px, #444 738px, #d2d2e8 738px);
}

/* watermarks */
.wechat {
    position: absolute;
    right: 35px;
    bottom: 29px;
    display: flex;
    align-items: center;
    gap: 5px;
    font-size: 27px;
    line-height: 40px;
    color: #fff;
    white-space: nowrap;
    text-shadow: 1px 1px 1px #555, 0 0 1px #777;
}
.wechat svg {
    width: 50px;
    height: 44px;
}
.wechat span {
    padding-bottom: 4px;
}
.blog-url {
    position: absolute;
    right: 10px;
    bottom: 10px;
    font-size: 15px;
    line-height: 20px;
    color: #fff;
    text-shadow: 0 0 1px #777;
}
```
